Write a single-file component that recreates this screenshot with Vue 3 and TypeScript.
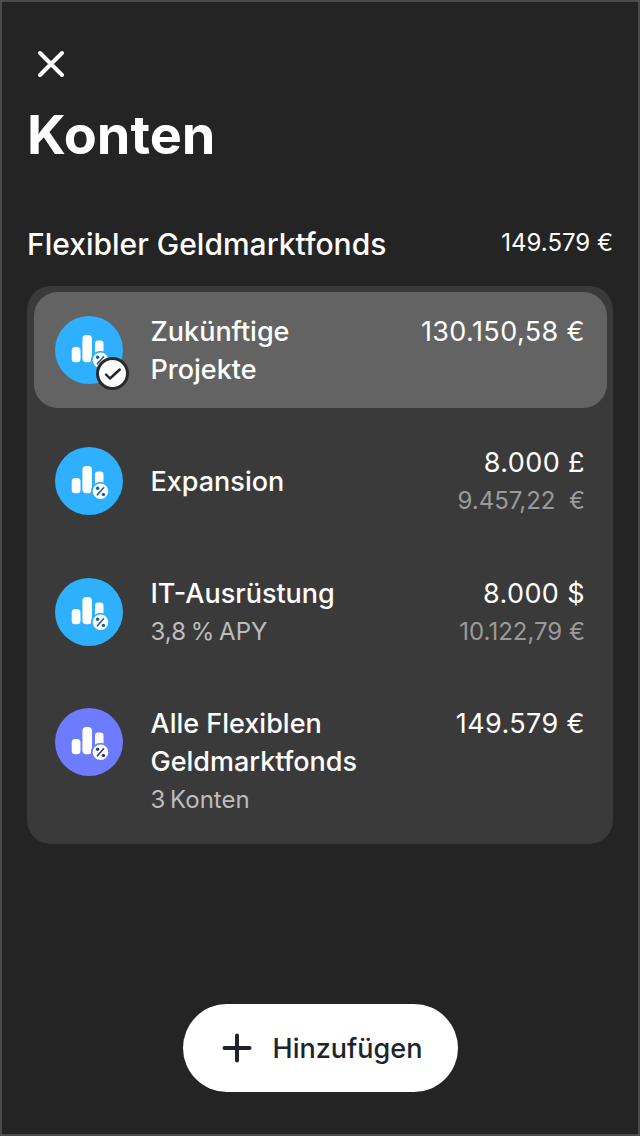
<script setup lang="ts">
interface Row { name: string[]; sub?: string; amount: string; second?: string; color: string; mark: string; selected?: boolean }
const rows: Row[] = [
  { name: ['Zukünftige', 'Projekte'], amount: '130.150,58 €', color: '#2eb0ff', mark: '#1a5f92', selected: true },
  { name: ['Expansion'], amount: '8.000 £', second: '9.457,22 \u00a0€', color: '#2eb0ff', mark: '#1a5f92' },
  { name: ['IT-Ausrüstung'], sub: '3,8 % APY', amount: '8.000 $', second: '10.122,79 €', color: '#2eb0ff', mark: '#1a5f92' },
  { name: ['Alle Flexiblen', 'Geldmarktfonds'], sub: '3 Konten', amount: '149.579 €', color: '#6d7cff', mark: '#2f3a78' },
]
</script>

<template>
  <main class="screen">
    <button class="close" aria-label="Schließen">
      <svg width="32" height="32" viewBox="0 0 32 32" fill="none" stroke="#fff" stroke-width="4" stroke-linecap="round">
        <path d="M5 5 L27 27 M27 5 L5 27" />
      </svg>
    </button>
    <h1 class="title">Konten</h1>
    <div class="section">
      <span class="section-name">Flexibler Geldmarktfonds</span>
      <span class="section-total">149.579 €</span>
    </div>
    <section class="card">
      <div v-for="row in rows" :key="row.amount" class="row" :class="{ selected: row.selected }">
        <div class="icon" :style="{ background: row.color }">
          <svg width="68" height="68" viewBox="0 0 68 68">
            <rect x="16.7" y="31" width="8.8" height="15.3" rx="3.5" fill="#fff" />
            <rect x="27.4" y="19" width="9.6" height="27.3" rx="4" fill="#fff" />
            <path d="M40 27.5 a3 3 0 0 1 3-3 h2.5 a3 3 0 0 1 3 3 v10 h-8.5 z" fill="#fff" />
            <circle cx="45.5" cy="44.3" r="8.7" fill="#fff" :stroke="row.color" stroke-width="1.8" />
            <path d="M48.6 40.8 L42.4 47.8" :stroke="row.mark" stroke-width="1.6" stroke-linecap="round" />
            <circle cx="42.6" cy="41.2" r="1.7" :fill="row.mark" />
            <circle cx="48.4" cy="47.4" r="1.7" :fill="row.mark" />
          </svg>
          <span v-if="row.selected" class="check">
            <svg width="20" height="20" viewBox="0 0 20 20" fill="none" stroke="#20242a" stroke-width="2.4" stroke-linecap="round" stroke-linejoin="round">
              <path d="M3 10.5 L7 14.5 L16.8 5.5" />
            </svg>
          </span>
        </div>
        <div class="text" :class="{ centered: row.name.length === 1 && !row.sub }">
          <div v-for="line in row.name" :key="line" class="line">{{ line }}</div>
          <div v-if="row.sub" class="sub">{{ row.sub }}</div>
        </div>
        <div class="amounts">
          <div class="line">{{ row.amount }}</div>
          <div v-if="row.second" class="second">{{ row.second }}</div>
        </div>
      </div>
    </section>
    <div class="spacer"></div>
    <button class="add">
      <svg width="30" height="30" viewBox="0 0 30 30" fill="none" stroke="#20242a" stroke-width="4" stroke-linecap="round">
        <path d="M15 2.5 V27.5 M2.5 15 H27.5" />
      </svg>
      <span>Hinzufügen</span>
    </button>
  </main>
</template>

<style>
body { margin: 0; background: #242424; }
</style>

<style scoped>
.screen {
  box-sizing: border-box;
  width: 640px;
  height: 1136px;
  border: 2px solid #4b4b4b;
  background: #242424;
  color: #fff;
  font-family: Inter, "Noto Sans", sans-serif;
  display: flex;
  flex-direction: column;
  padding: 46px 25px 42px;
}
.close {
  width: 32px;
  height: 32px;
  padding: 0;
  margin-left: 8px;
  background: none;
  border: 0;
  display: flex;
}
.title {
  margin: 23px 0 0 0;
  font-size: 54px;
  line-height: 64px;
  font-weight: 700;
}
.section {
  margin: 58px 0 0 0;
  display: flex;
  justify-content: space-between;
  align-items: flex-start;
}
.section-name { font-size: 30px; line-height: 38px; font-weight: 500; }
.section-total { font-size: 24px; line-height: 34px; font-weight: 400; margin-top: 1px; }
.card {
  margin-top: 23px;
  background: #3a3a3a;
  border-radius: 24px;
  padding: 6px 6px 7px 7px;
  display: flex;
  flex-direction: column;
  gap: 14.8px;
}
.row {
  display: flex;
  align-items: flex-start;
  padding: 20px 22px 20px 21px;
  border-radius: 24px;
  min-height: 76px;
}
.row.selected { background: #636363; }
.icon {
  position: relative;
  width: 68px;
  height: 68px;
  margin-top: 4px;
  border-radius: 50%;
  flex: none;
}
.icon > svg { display: block; }
.check {
  position: absolute;
  left: 41px;
  top: 41px;
  width: 33px;
  height: 33px;
  box-sizing: border-box;
  border: 3.5px solid #2a2a2a;
  border-radius: 50%;
  background: #fff;
  display: flex;
  align-items: center;
  justify-content: center;
}
.text { margin: 1px 0 -1px 27.5px; flex: 1; }
.text.centered { align-self: center; }
.line { font-size: 27px; line-height: 38px; font-weight: 450; }
.sub { font-size: 24px; line-height: 37px; color: #bdbdbd; word-spacing: -2px; }
.amounts { text-align: right; margin: 1px 0 -1px; }
.amounts .line { font-weight: 400; letter-spacing: 0.4px; }
.second { font-size: 24px; line-height: 38px; color: #9a9a9a; }
.spacer { flex: 1; }
.add {
  align-self: center;
  height: 88px;
  width: 275px;
  border: 0;
  border-radius: 44px;
  padding: 0 0 0 4px;
  background: #fff;
  color: #20242a;
  font-family: inherit;
  font-size: 27px;
  font-weight: 500;
  display: flex;
  align-items: center;
  justify-content: center;
  gap: 21px;
}
</style>
